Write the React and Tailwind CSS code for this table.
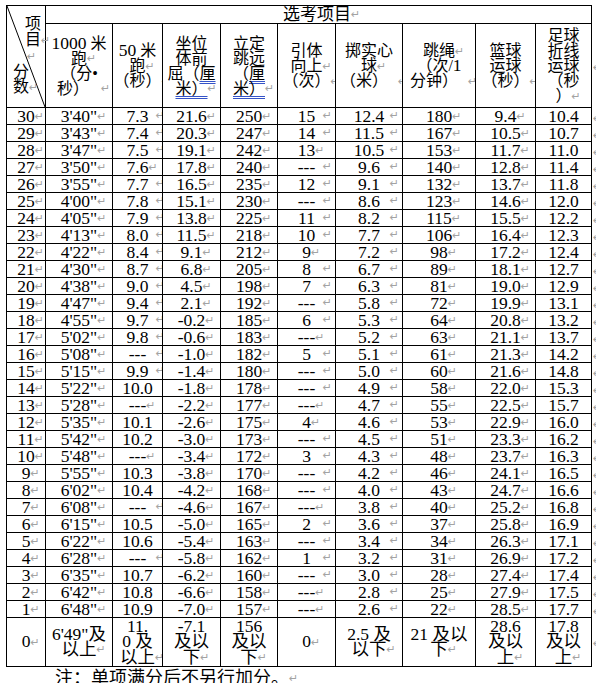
import React from "react";

const ARROW = "\u21B5";

// 分数, 1000米, 50米, 坐位体前屈, 立定跳远, 引体向上, 掷实心球, 跳绳, 篮球运球, 足球折线运球
// a trailing "~" puts the cell mark right after the text instead of at the cell edge
const rows = [
  ["30", `3'40"`, "7.3", "21.6", "250", "15", "12.4", "180", "9.4", "10.4"],
  ["29", `3'43"`, "7.4", "20.3", "247", "14", "11.5", "167", "10.5", "10.7"],
  ["28", `3'47"`, "7.5", "19.1", "242", "13~", "10.5", "153", "11.7", "11.0"],
  ["27", `3'50"`, "7.6~", "17.8", "240", "---", "9.6", "140", "12.8", "11.4"],
  ["26", `3'55"`, "7.7", "16.5", "235", "12", "9.1", "132", "13.7", "11.8"],
  ["25", `4'00"`, "7.8", "15.1", "230", "---", "8.6", "123", "14.6", "12.0"],
  ["24", `4'05"`, "7.9", "13.8", "225", "11", "8.2", "115", "15.5", "12.2"],
  ["23", `4'13"`, "8.0", "11.5", "218", "10", "7.7", "106", "16.4", "12.3"],
  ["22", `4'22"`, "8.4", "9.1", "212", "9~", "7.2", "98", "17.2", "12.4"],
  ["21", `4'30"`, "8.7", "6.8", "205", "8", "6.7", "89", "18.1", "12.7"],
  ["20", `4'38"`, "9.0", "4.5", "198", "7", "6.3", "81", "19.0", "12.9"],
  ["19", `4'47"`, "9.4", "2.1", "192", "---", "5.8", "72", "19.9", "13.1"],
  ["18", `4'55"`, "9.7", "-0.2", "185", "6", "5.3", "64", "20.8", "13.2"],
  ["17", `5'02"`, "9.8", "-0.6", "183", "---~", "5.2", "63", "21.1", "13.7"],
  ["16", `5'08"`, "---", "-1.0", "182", "5", "5.1", "61", "21.3", "14.2"],
  ["15", `5'15"`, "9.9", "-1.4", "180", "---", "5.0", "60", "21.6", "14.8"],
  ["14", `5'22"`, "10.0", "-1.8", "178", "---", "4.9", "58", "22.0", "15.3"],
  ["13", `5'28"`, "---~", "-2.2", "177", "---~", "4.7", "55", "22.5", "15.7"],
  ["12", `5'35"`, "10.1", "-2.6", "175", "4~", "4.6", "53", "22.9", "16.0"],
  ["11", `5'42"`, "10.2", "-3.0", "173", "---", "4.5", "51", "23.3", "16.2"],
  ["10", `5'48"`, "---~", "-3.4", "172", "3", "4.3", "48", "23.7", "16.3"],
  ["9", `5'55"`, "10.3", "-3.8", "170", "---", "4.2", "46", "24.1", "16.5"],
  ["8", `6'02"`, "10.4", "-4.2", "168", "---", "4.0", "43", "24.7", "16.6"],
  ["7", `6'08"`, "---", "-4.6", "167", "---~", "3.8", "40", "25.2", "16.8"],
  ["6", `6'15"`, "10.5", "-5.0", "165", "2", "3.6", "37", "25.8", "16.9"],
  ["5", `6'22"`, "10.6", "-5.4", "163", "---", "3.4", "34", "26.3", "17.1"],
  ["4", `6'28"`, "---", "-5.8", "162", "1", "3.2", "31", "26.9", "17.2"],
  ["3", `6'35"`, "10.7", "-6.2", "160", "---", "3.0", "28", "27.4", "17.4"],
  ["2", `6'42"`, "10.8", "-6.6", "158", "---~", "2.8", "25", "27.9", "17.5"],
  ["1", `6'48"`, "10.9", "-7.0", "157", "---~", "2.6", "22", "28.5", "17.7"],
];

// i = mark after text, e = mark at the cell's right edge, n = no mark
const modes = ["i", "i", "e", "i", "i", "e", "e", "i", "i", "n"];
const edgeGap = { 2: "-mr-[3px]", 5: "mr-[3px]", 6: "mr-[3px]" };

const cell = "border border-black p-0 text-center align-middle overflow-hidden";
const arrowText = "font-['DejaVu_Sans'] text-[11px] leading-none text-[#a3a3a3]";

const Mark = () => (
  <span className={`relative -top-[1px] inline-block w-0 text-left align-middle ${arrowText}`}>{ARROW}</span>
);

const DataCell = ({ value, col }) => {
  const inline = value.endsWith("~");
  const text = inline ? value.slice(0, -1) : value;
  let mode = inline ? "i" : modes[col];
  if (col === 2 && text.length >= 4) mode = "n";

  if (mode === "e") {
    return (
      <td className={`${cell} h-[16.9px]`}>
        <div className="grid grid-cols-[1fr_auto_1fr] items-center">
          <span />
          <span>{text}</span>
          <span className={`justify-self-end -translate-y-[1px] ${arrowText} ${edgeGap[col]}`}>{ARROW}</span>
        </div>
      </td>
    );
  }
  return (
    <td className={`${cell} h-[16.9px]`}>
      {text}
      {mode === "i" && <Mark />}
    </td>
  );
};

const RowEnd = () => (
  <td className="w-[5px] p-0 align-middle">
    <span className={`pl-[1px] ${arrowText}`}>{ARROW}</span>
  </td>
);

const Blue = ({ children }) => (
  <span className="underline decoration-[#3553c8] decoration-double decoration-1 underline-offset-2">{children}</span>
);

export default function App() {
  return (
    <div className="min-h-[683px] w-[596px] overflow-hidden bg-white pl-[6px] pt-[5px] font-['Liberation_Serif','Noto_Sans_CJK_SC',serif] text-[17.5px] leading-[16px] text-black">
      <table className="w-[590px] table-fixed border-collapse">
        <colgroup>
          <col className="w-[39px]" />
          <col className="w-[67px]" />
          <col className="w-[50px]" />
          <col className="w-[58px]" />
          <col className="w-[57px]" />
          <col className="w-[58px]" />
          <col className="w-[67px]" />
          <col className="w-[73px]" />
          <col className="w-[60px]" />
          <col className="w-[56px]" />
          <col className="w-[5px]" />
        </colgroup>
        <thead>
          <tr>
            <td rowSpan={2} className="relative border border-black p-0 align-top">
              <svg className="absolute inset-0 h-full w-full" viewBox="0 0 100 100" preserveAspectRatio="none">
                <line x1="0" y1="0" x2="100" y2="100" stroke="black" strokeWidth="1" vectorEffect="non-scaling-stroke" />
              </svg>
              <div className="flex h-[101px] flex-col justify-between pb-[13px] pt-[10px] text-[16px]">
                <div className="self-end pr-[4px] leading-[16px]">
                  项<br />目<Mark /><br /><span className="pl-[2px]"><Mark /></span>
                </div>
                <div className="self-start pl-[6px] leading-[15px]">
                  分<br />数<Mark />
                </div>
              </div>
            </td>
            <td colSpan={9} className="h-[18px] border border-black p-0 pl-[237px] text-left align-middle text-[17px] leading-[16px]">
              选考项目<Mark />
            </td>
            <td className="p-0" />
          </tr>
          <tr className="text-[16px] leading-[15px]">
            <td className={`${cell} h-[84px]`}>
              <span className="text-[17.5px]">1000</span> 米<br />跑<Mark /><br />（分•<br />秒）<span className="pl-[12px]"><Mark /></span>
            </td>
            <td className={cell}>
              <span className="text-[17.5px]">50</span> 米<br />跑<Mark /><br />（秒）<Mark />
            </td>
            <td className={cell}>
              坐位<br />体前<br />屈（<Blue>厘</Blue><br /><Blue>米）</Blue><Mark />
            </td>
            <td className={cell}>
              立定<br />跳远<br />（<Blue>厘</Blue><br /><Blue>米）</Blue><Mark />
            </td>
            <td className={cell}>
              引体<br />向上<Mark /><br />（次）<Mark />
            </td>
            <td className={cell}>
              掷实心<br />球<Mark /><br />（米）<span className="pl-[10px]"><Mark /></span>
            </td>
            <td className={cell}>
              跳绳<Mark /><br />（次/<span className="text-[17.5px]">1</span><br />分钟）<span className="pl-[10px]"><Mark /></span>
            </td>
            <td className={cell}>
              篮球<br />运球<br />（秒）<Mark />
            </td>
            <td className={cell}>
              足球<br />折线<br />运球<br />（秒<br />）<Mark />
            </td>
            <RowEnd />
          </tr>
        </thead>
        <tbody>
          {rows.map((r) => (
            <tr key={r[0]}>
              {r.map((v, i) => (
                <DataCell key={i} value={v} col={i} />
              ))}
              <RowEnd />
            </tr>
          ))}
          <tr className="leading-[15.5px]">
            <td className={`${cell} h-[49px]`}>0<Mark /></td>
            <td className={cell}>6'49"及<br />以上<Mark /></td>
            <td className={cell}>11.<br />0 及<br />以上<Mark /></td>
            <td className={cell}>-7.1<br />及以<br />下<Mark /></td>
            <td className={cell}>156<br />及以<br />下<Mark /></td>
            <td className={cell}>0<Mark /></td>
            <td className={cell}>2.5 及<br />以下<Mark /></td>
            <td className={cell}>21 及以<br />下<Mark /></td>
            <td className={cell}>28.6<br />及以<br />上<Mark /></td>
            <td className={cell}>17.8<br />及以<br />上<Mark /></td>
            <RowEnd />
          </tr>
        </tbody>
      </table>
      <p className="pl-[49px] font-['Noto_Sans_CJK_SC',sans-serif] text-[18px] leading-[18px]">
        注：单项满分后<span className="underline decoration-red-500 decoration-wavy underline-offset-4">不</span>另行加分。<Mark />
      </p>
    </div>
  );
}
